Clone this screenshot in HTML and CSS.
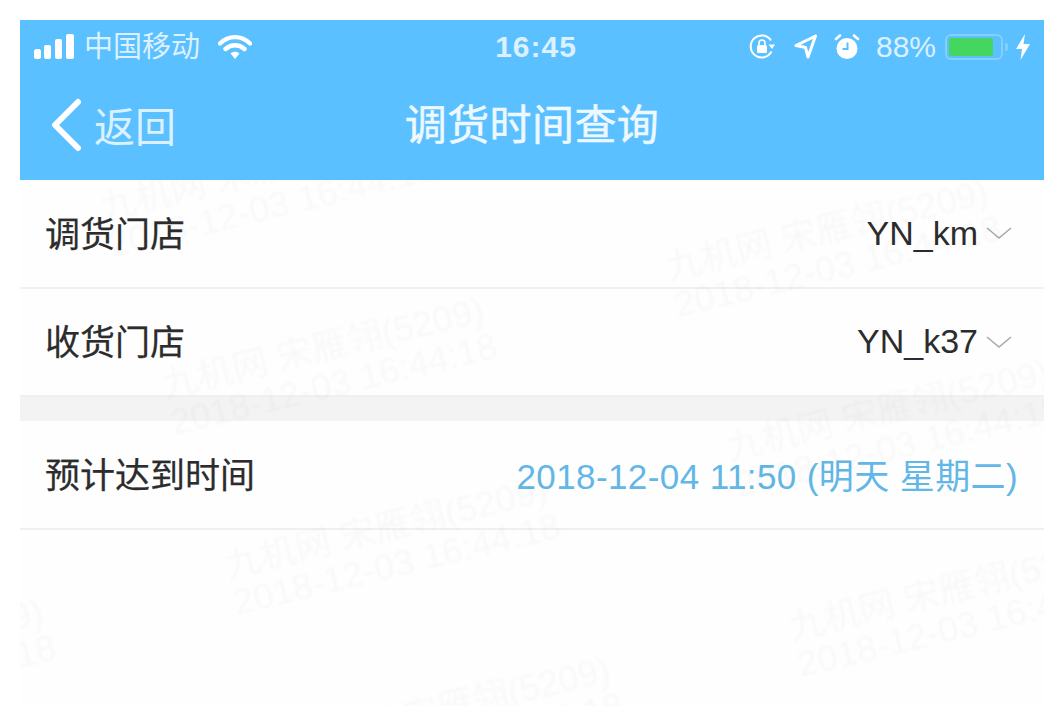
FILE: index.html
```html
<!DOCTYPE html>
<html lang="zh-CN">
<head>
<meta charset="utf-8">
<title>调货时间查询</title>
<link rel="stylesheet" href="styles.css">
</head>
<body>
<div class="screen">
  <header class="header">
    <div class="status">
      <div class="status-left">
        <svg class="signal" viewBox="0 0 40 26" width="40" height="26"><rect x="0" y="15" width="7" height="10" rx="2.5"/><rect x="10" y="11" width="7" height="14" rx="2"/><rect x="21" y="5" width="7" height="20" rx="2"/><rect x="32" y="0" width="8" height="25" rx="2"/></svg>
        <span class="carrier">中国移动</span>
        <svg class="wifi" viewBox="0 0 34 26" width="34" height="26"><path d="M2 9.5C10.5 1 23.5 1 32 9.5M7.5 15C13 10 21 10 26.5 15" fill="none" stroke="#fff" stroke-width="4.4" stroke-linecap="round"/><path d="M12.5 19.5C15 17.3 19 17.3 21.5 19.5L17 25Z" fill="#fff"/></svg>
      </div>
      <span class="clock">16:45</span>
      <div class="status-right">
        <svg class="lock" viewBox="0 0 26 26" width="26" height="26"><path d="M22.5 17.5A11 11 0 1 1 22 6.5" fill="none" stroke="#fff" stroke-width="2"/><path d="M19.5 10.5L26 10.5L23 15Z" fill="#fff"/><rect x="8" y="11" width="10" height="8" rx="1.5" fill="#fff"/><path d="M10 11V9a3 3 0 0 1 6 0v2" fill="none" stroke="#fff" stroke-width="1.6"/></svg>
        <svg class="arrow" viewBox="0 0 23 25" width="23" height="25"><path d="M21.5 2L2 11.5L11.5 13.5L14 23Z" fill="none" stroke="#fff" stroke-width="3" stroke-linejoin="round"/></svg>
        <svg class="alarm" viewBox="0 0 26 26" width="26" height="26"><circle cx="13" cy="14.5" r="10.5" fill="#fff"/><path d="M2 5L6 1.5M24 5L20 1.5" stroke="#fff" stroke-width="2.6" stroke-linecap="round"/><path d="M13.5 8.5V15H8.5" fill="none" stroke="#5bc0ff" stroke-width="2"/></svg>
        <span class="percent">88%</span>
        <div class="battery"><div class="battery-fill"></div></div>
        <span class="battery-tip"></span>
        <svg class="bolt" viewBox="0 0 14 26" width="14" height="26"><path d="M9 0L0 15H6L4.5 26L14 10H7.5Z" fill="#fff"/></svg>
      </div>
    </div>
    <nav class="nav">
      <div class="back">
        <svg class="back-icon" viewBox="0 0 32 54" width="32" height="54"><path d="M28 4L5 27L28 50" fill="none" stroke="#fff" stroke-width="6" stroke-linecap="round" stroke-linejoin="round"/></svg>
        <span class="back-text">返回</span>
      </div>
      <h1 class="title">调货时间查询</h1>
    </nav>
  </header>
  <main>
    <div class="row">
      <span class="label">调货门店</span>
      <span class="value">YN_km<svg class="chev" viewBox="0 0 26 14" width="26" height="14"><path d="M1 2L13 12L25 2" fill="none" stroke="#aaa" stroke-width="1.6"/></svg></span>
    </div>
    <div class="row">
      <span class="label">收货门店</span>
      <span class="value">YN_k37<svg class="chev" viewBox="0 0 26 14" width="26" height="14"><path d="M1 2L13 12L25 2" fill="none" stroke="#aaa" stroke-width="1.6"/></svg></span>
    </div>
    <div class="gap"></div>
    <div class="row">
      <span class="label">预计达到时间</span>
      <span class="date">2018-12-04 11:50 (明天 星期二)</span>
    </div>
  </main>
  <div class="marks">
    <div class="mark m1">九机网 宋雁翎(5209)<br>2018-12-03 16:44:18</div>
    <div class="mark m2">九机网 宋雁翎(5209)<br>2018-12-03 16:44:18</div>
    <div class="mark m3">九机网 宋雁翎(5209)<br>2018-12-03 16:44:18</div>
    <div class="mark m4">九机网 宋雁翎(5209)<br>2018-12-03 16:44:18</div>
    <div class="mark m5">九机网 宋雁翎(5209)<br>2018-12-03 16:44:18</div>
    <div class="mark m6">九机网 宋雁翎(5209)<br>2018-12-03 16:44:18</div>
    <div class="mark m7">九机网 宋雁翎(5209)<br>2018-12-03 16:44:18</div>
    <div class="mark m8">九机网 宋雁翎(5209)<br>2018-12-03 16:44:18</div>
  </div>
</div>
</body>
</html>
```
FILE: styles.css
```css
html, body {
  margin: 0;
  height: 100%;
  background: #fff;
  overflow: hidden;
}
body {
  padding: 20px 18px 0 20px;
  box-sizing: border-box;
  font-family: "Liberation Sans", "Noto Sans CJK SC", sans-serif;
}
.screen {
  position: relative;
  height: 100%;
  overflow: hidden;
  background: #fefefe;
  filter: blur(0.7px);
}
.header {
  position: relative;
  z-index: 2;
  background: #5bc0ff;
  color: #fff;
  height: 160px;
}
.status {
  height: 52px;
  padding: 1px 14px 0 14px;
  box-sizing: border-box;
  display: grid;
  grid-template-columns: 1fr auto 1fr;
  align-items: center;
  color: #dcf1ff;
}
.status svg { display: block; fill: #fff; }
.status-left, .status-right { display: flex; align-items: center; }
.status-right { justify-content: flex-end; }
.carrier { font-size: 29px; margin-left: 10px; line-height: 34px; }
.wifi { margin-left: 18px; }
.clock { font-size: 30px; font-weight: 700; letter-spacing: 1px; line-height: 34px; margin-left: 8px; }
.arrow { margin-left: 19px; }
.alarm { margin-left: 17px; }
.percent { font-size: 30px; margin-left: 16px; line-height: 34px; }
.battery {
  margin-left: 9px;
  width: 58px;
  height: 26px;
  box-sizing: border-box;
  border: 2px solid #86cffb;
  border-radius: 6px;
  padding: 2px;
}
.battery-fill { width: 44px; height: 100%; background: #45d65f; border-radius: 2px; }
.battery-tip { width: 3px; height: 8px; background: #86cffb; margin-left: 2px; border-radius: 0 2px 2px 0; }
.bolt { margin-left: 8px; }
.nav {
  position: relative;
  height: 108px;
  display: flex;
  align-items: center;
  justify-content: center;
}
.back {
  position: absolute;
  left: 30px;
  top: 0;
  height: 100%;
  padding-bottom: 2px;
  box-sizing: border-box;
  display: flex;
  align-items: center;
  gap: 12px;
  font-size: 41px;
  color: #dcf1ff;
}
.back-text { margin-bottom: 3px; }
.title {
  margin: 0;
  font-size: 42px;
  letter-spacing: 0.4px;
  font-weight: 400;
  line-height: 50px;
  color: #eef8ff;
  -webkit-text-stroke: 0.5px #eef8ff;
}
.row {
  height: 108.5px;
  box-sizing: border-box;
  border-bottom: 2px solid #f0f0f0;
  padding: 0 26px 4px 25px;
  display: flex;
  align-items: center;
  justify-content: space-between;
  font-size: 35px;
  color: #2c2c2c;
}
.label { -webkit-text-stroke: 0.25px #2c2c2c; }
.value { display: flex; align-items: center; font-size: 34px; margin-top: 4px; }
.chev { margin-left: 8px; margin-right: 6px; }
.date { color: #62b7e6; font-size: 35px; letter-spacing: 0.4px; margin-top: 2px; }
.gap { height: 24px; background: #f3f3f3; }
.marks { position: absolute; inset: 0; z-index: 1; pointer-events: none; filter: blur(1px); }
.mark {
  position: absolute;
  white-space: nowrap;
  font-size: 36px;
  line-height: 38px;
  color: rgba(0, 0, 0, 0.022);
  transform: rotate(-13.5deg);
  transform-origin: left top;
}
.m1 { left: 76px; top: 170px; }
.m2 { left: 642px; top: 230px; }
.m3 { left: 138px; top: 348px; }
.m4 { left: 703px; top: 410px; }
.m5 { left: 201px; top: 528px; }
.m6 { left: 765px; top: 590px; }
.m7 { left: -303px; top: 650px; }
.m8 { left: 264px; top: 708px; }
```
